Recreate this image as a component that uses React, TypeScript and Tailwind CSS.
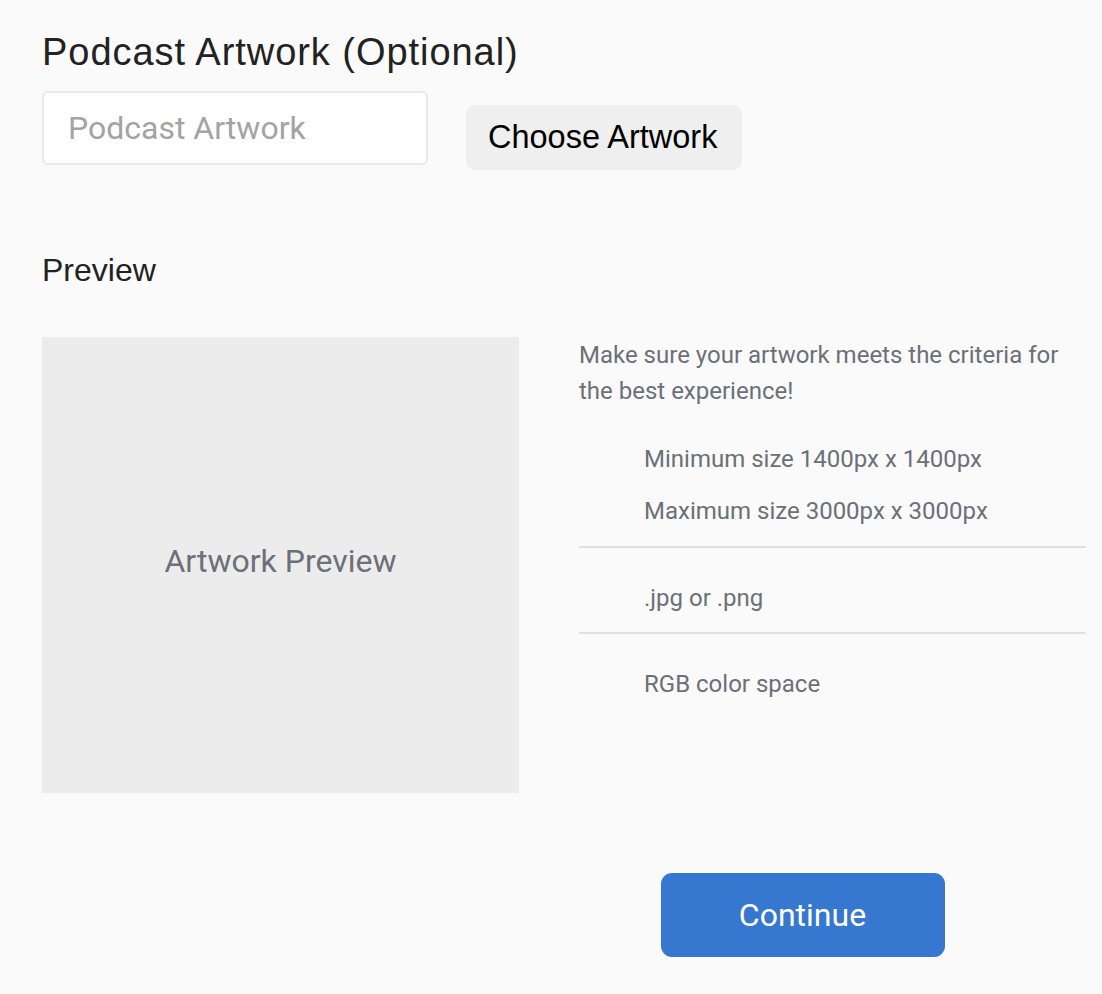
import React from 'react';

const criteria = [
  ['Minimum size 1400px x 1400px', 'Maximum size 3000px x 3000px'],
  ['.jpg or .png'],
  ['RGB color space'],
];

export default function App() {
  return (
    <div className="min-h-screen bg-[#fafafa] pl-[42px] pr-[16px] pt-[28px] font-['Roboto',sans-serif]">
      <h1 className="font-['Liberation_Sans',Arial,sans-serif] text-[38px] leading-[48px] tracking-[0.95px] text-[#222]">
        Podcast Artwork (Optional)
      </h1>
      <div className="mt-[15px] flex items-start gap-[38px]">
        <input
          placeholder="Podcast Artwork"
          className="h-[74px] w-[386px] rounded-[6px] border-2 border-[#e8e8e8] bg-white px-[24px] text-[32px] text-[#333] placeholder:text-[#a3a3a3] outline-none"
        />
        <button className="mt-[14px] h-[65px] rounded-[9px] bg-[#efefef] pl-[22px] pr-[25px] font-['Liberation_Sans',Arial,sans-serif] text-[32.5px] text-black">
          Choose Artwork
        </button>
      </div>

      <h2 className="mt-[80px] font-['Liberation_Sans',Arial,sans-serif] text-[32px] leading-[40px] text-[#222]">
        Preview
      </h2>

      <div className="mt-[47px] flex">
        <div className="flex h-[456px] w-[477px] shrink-0 items-center justify-center bg-[#ececec] pb-[8px] text-[32px] text-[#6b7079]">
          Artwork Preview
        </div>
        <div className="flex-1 pl-[60px] text-[24px] text-[#6b7079]">
          <p className="leading-[36px]">Make sure your artwork meets the criteria for the best experience!</p>
          <div className="mt-[24px]">
            {criteria.map((group, i) => (
              <div
                key={i}
                className={i > 0 ? 'border-t-2 border-[#e0e0e0] pt-[24px] pb-[8px]' : 'pb-[9px]'}
              >
                {group.map((t) => (
                  <div key={t} className="pl-[65px] leading-[52px]">
                    {t}
                  </div>
                ))}
              </div>
            ))}
          </div>
        </div>
      </div>

      <div className="mt-[80px] flex pb-[37px]">
        <div className="w-[477px] shrink-0" />
        <div className="flex flex-1 justify-center">
          <button className="h-[84px] w-[284px] rounded-[11px] bg-[#3677cf] text-[32px] text-white">
            Continue
          </button>
        </div>
      </div>
    </div>
  );
}
